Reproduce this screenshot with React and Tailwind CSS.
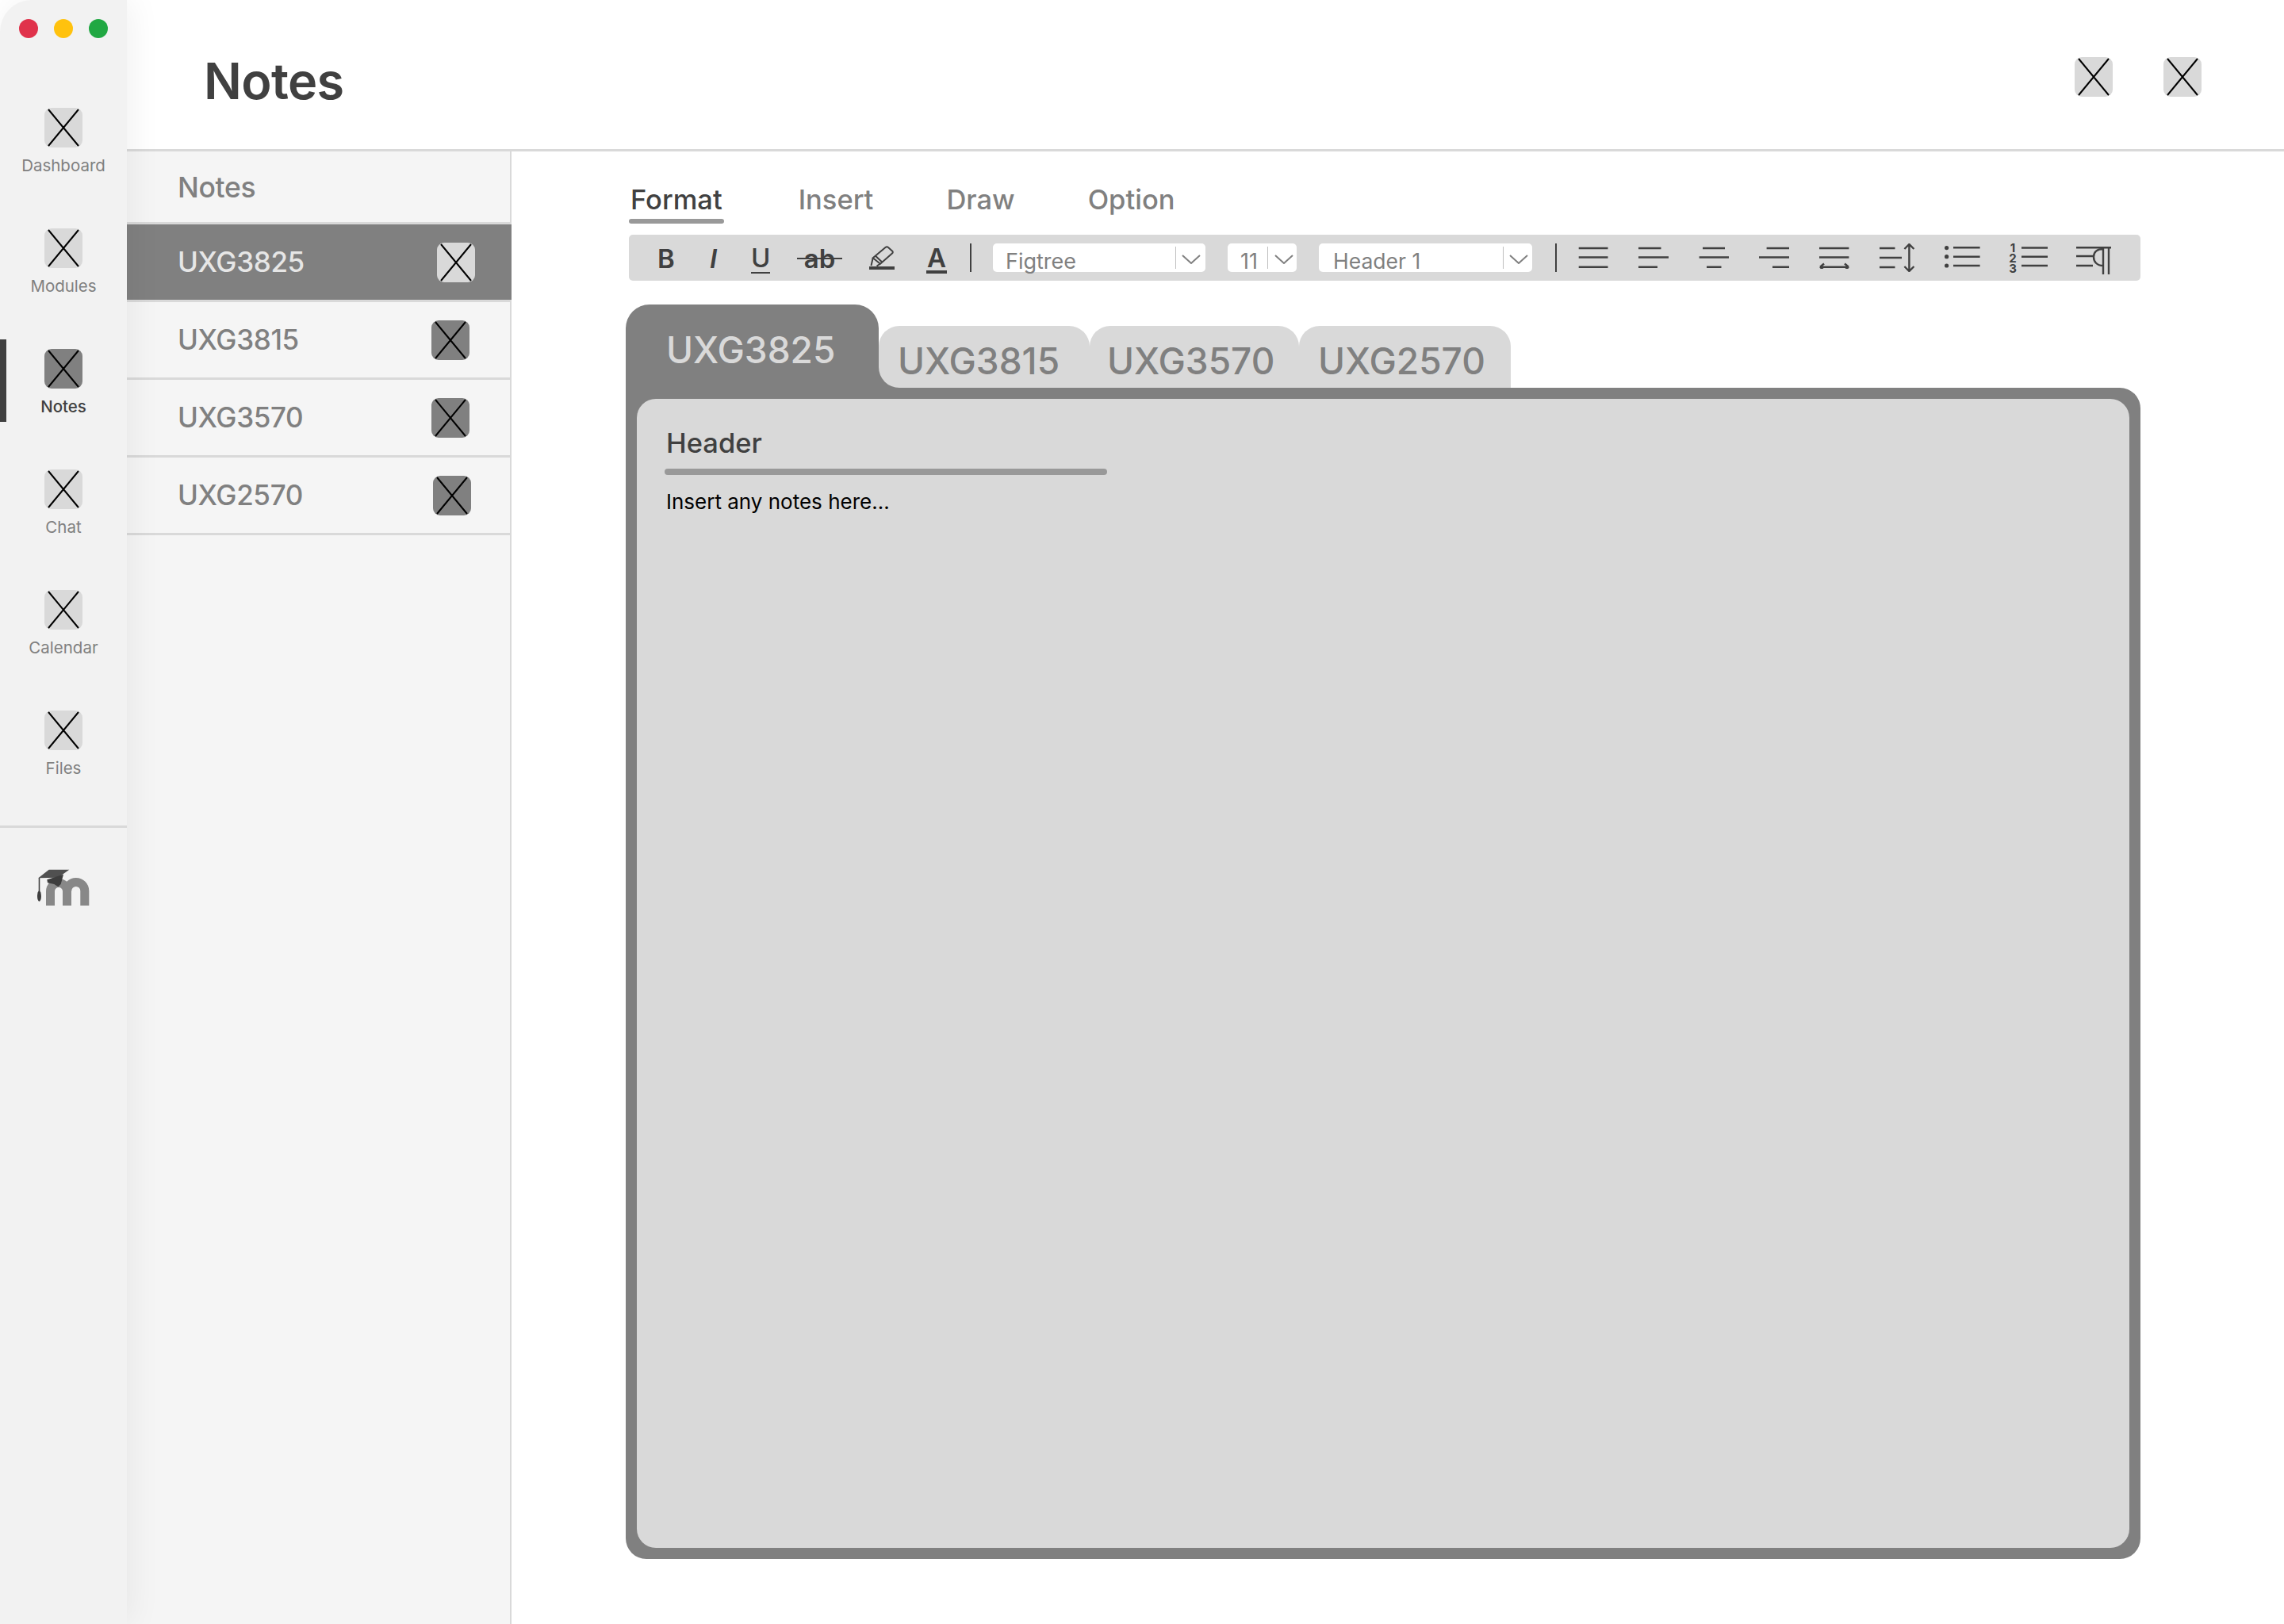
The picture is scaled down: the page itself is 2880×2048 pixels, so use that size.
import React from "react";

function Ph({ dark = false, className = "" }) {
  return (
    <div className={`w-[48px] h-[50px] shrink-0 rounded-[9px] ${dark ? "bg-[#808080]" : "bg-[#d9d9d9]"} ${className}`}>
      <svg viewBox="0 0 48 50" width="48" height="50" fill="none" stroke="#000" strokeWidth="2">
        <path d="M5 2 L43 48 M43 2 L5 48" />
      </svg>
    </div>
  );
}

function NavItem({ label, active = false }) {
  return (
    <div className="relative flex flex-col items-center">
      {active && <div className="absolute left-0 top-[-12px] w-[8px] h-[104px] bg-[#404040]" />}
      <Ph dark={active} />
      <div className={`mt-[9px] h-[27px] leading-[28px] text-[20.5px] ${active ? "text-[#404040] font-medium" : "text-[#808080]"}`}>{label}</div>
    </div>
  );
}

function Chevron({ className = "" }) {
  return (
    <svg className={`mt-[3px] ${className}`} width="24" height="12" viewBox="0 0 24 12" fill="none" stroke="#808080" strokeWidth="2">
      <path d="M1 1 L12 11 L23 1" />
    </svg>
  );
}

function ListRow({ label, iconClass }) {
  return (
    <div className="h-[98px] flex items-center border-b-[3px] border-[#d9d9d9] pl-[64px]">
      <div className="text-[35px] font-medium text-[#808080] tracking-[-0.01em]">{label}</div>
      <Ph dark className={`ml-auto ${iconClass}`} />
    </div>
  );
}

function Lines({ tops, className = "" }) {
  return (
    <svg className={className} width="40" height="28" viewBox="0 0 40 28" fill="none" stroke="#404040" strokeWidth="2.4">
      <path d={tops} />
    </svg>
  );
}

export default function App() {
  return (
    <div className="w-[2880px] h-[2048px] flex bg-white overflow-hidden font-['Inter','Noto_Sans',sans-serif]">
      <aside className="relative z-10 w-[160px] shrink-0 rounded-tl-[40px] bg-[#f2f2f2] shadow-[6px_0_40px_rgba(0,0,0,0.06)] flex flex-col">
        <div className="flex gap-[20px] pl-[24px] pt-[24px]">
          <div className="w-[24px] h-[24px] rounded-full bg-[#e0324b]" />
          <div className="w-[24px] h-[24px] rounded-full bg-[#ffc20e]" />
          <div className="w-[24px] h-[24px] rounded-full bg-[#21a843]" />
        </div>
        <nav className="mt-[88px] flex flex-col gap-[66px]">
          <NavItem label="Dashboard" />
          <NavItem label="Modules" />
          <NavItem label="Notes" active />
          <NavItem label="Chat" />
          <NavItem label="Calendar" />
          <NavItem label="Files" />
        </nav>
        <div className="mt-[59px] h-[3px] bg-[#d9d9d9]" />
        <div className="mt-[52px] pl-[47px]">
          <svg width="66" height="46" viewBox="0 0 66 46" fill="none">
            <path d="M16.5 46 V28 a10.5 10.5 0 0 1 21 0 V46 M37.8 27.4 a11 11 0 0 1 22 0 V46" stroke="#888888" strokeWidth="11" />
            <path d="M14.7 0.7 H40.3 L26.3 10.7 L1.3 11.3 Z" fill="#505050" />
            <path d="M12.3 13.3 L33 6.7 L29.7 19 L26.3 22.3 L21.3 19 L13 17.3 Z" fill="#3d3d3d" />
            <path d="M2.5 11 V28" stroke="#404040" strokeWidth="1.6" />
            <ellipse cx="2.5" cy="34" rx="2.5" ry="6.7" fill="#404040" />
          </svg>
        </div>
      </aside>

      <main className="flex-1 flex flex-col min-w-0">
        <header className="h-[191px] shrink-0 border-b-[3px] border-[#d9d9d9] flex items-center pl-[97px] pr-[104px] pt-[5px]">
          <h1 className="text-[63px] leading-[76px] font-semibold text-[#404040] tracking-[-0.01em] mt-[11px]">Notes</h1>
          <div className="ml-auto flex gap-[64px]">
            <Ph />
            <Ph />
          </div>
        </header>

        <div className="flex-1 flex min-h-0">
          <section className="w-[485px] shrink-0 bg-[#f5f5f5] border-r-[2px] border-[#d9d9d9] flex flex-col">
            <div className="h-[92px] shrink-0 border-b-[3px] border-[#d9d9d9] flex items-center pl-[64px] pt-[2px]">
              <div className="text-[35.5px] font-medium text-[#808080] tracking-[-0.01em]">Notes</div>
            </div>
            <div className="h-[98px] mr-[-2px] flex items-center bg-[#808080] border-b-[3px] border-[#d9d9d9] pl-[64px]">
              <div className="text-[35px] font-medium text-[#e6e6e6] tracking-[-0.01em]">UXG3825</div>
              <Ph className="ml-auto mr-[46px]" />
            </div>
            <ListRow label="UXG3815" iconClass="mr-[51px]" />
            <ListRow label="UXG3570" iconClass="mr-[51px]" />
            <ListRow label="UXG2570" iconClass="mr-[49px]" />
          </section>

          <section className="flex-1 pl-[144px] pt-[39px] min-w-0">
            <div className="ml-[6px] h-[44px] flex gap-[92px] text-[34.5px] leading-[44px] font-medium text-[#808080]">
              <div className="relative text-[#404040] mr-[4px]">
                Format
                <div className="absolute left-[-2px] right-[-2px] top-[46px] h-[6px] rounded-full bg-[#999999]" />
              </div>
              <div>Insert</div>
              <div>Draw</div>
              <div>Option</div>
            </div>

            <div className="ml-[4px] mt-[22px] w-[1906px] h-[58px] rounded-[5px] bg-[#d9d9d9] flex items-center text-[#404040]">
              <div className="ml-[36px] w-[20px] text-[33px] leading-none font-semibold text-center pt-[2px]">B</div>
              <div className="ml-[46px] w-[9px] text-[33px] leading-none font-semibold italic text-center pt-[2px]">I</div>
              <div className="ml-[43px] w-[24px] relative text-[33px] leading-none font-medium text-center">
                U
                <div className="absolute left-0 right-0 top-[34px] h-[2px] bg-[#404040]" />
              </div>
              <div className="ml-[34px] w-[57px] relative text-[33px] leading-none font-semibold text-center pt-[2px]">
                ab
                <div className="absolute left-0 right-0 top-[17px] h-[2px] bg-[#404040]" />
              </div>
              <svg className="ml-[34px]" width="32" height="30" viewBox="0 0 32 30" fill="none" stroke="#404040" strokeWidth="2">
                <path d="M4.7 15.3 L20.5 2 Q22.3 0.6 24 2 L29 6.4 Q30.6 8 29 9.4 L14 22.7 Z M8 12.7 L16.7 21 M4.7 15.3 L2.5 25 M14 22.7 L9.5 25.5" />
                <path d="M0 26 H32 V30 H0 Z" fill="#404040" stroke="none" />
              </svg>
              <div className="ml-[40px] w-[26px] relative text-[33px] leading-none font-semibold text-center">
                A
                <div className="absolute left-0 right-0 top-[32px] h-[4px] bg-[#404040]" />
              </div>
              <div className="ml-[29px] w-[2px] h-[36px] bg-[#404040]" />

              <div className="ml-[27px] w-[268px] h-[36px] rounded-[5px] bg-white flex items-center pl-[16px] text-[27px] text-[#808080]">
                <div className="w-[214px] pt-[10px]">Figtree</div>
                <div className="w-[1px] h-[28px] bg-[#bfbfbf]" />
                <Chevron className="ml-[7px]" />
              </div>
              <div className="ml-[28px] w-[87px] h-[36px] rounded-[5px] bg-white flex items-center pl-[16px] text-[27px] text-[#808080]">
                <div className="w-[34px] pt-[10px]">11</div>
                <div className="w-[1px] h-[28px] bg-[#bfbfbf]" />
                <Chevron className="ml-[8px]" />
              </div>
              <div className="ml-[28px] w-[269px] h-[36px] rounded-[5px] bg-white flex items-center pl-[18px] text-[26.5px] text-[#808080]">
                <div className="w-[214px] pt-[10px]">Header 1</div>
                <div className="w-[1px] h-[28px] bg-[#bfbfbf]" />
                <Chevron className="ml-[7px]" />
              </div>
              <div className="ml-[29px] w-[2px] h-[36px] bg-[#404040]" />

              <Lines className="ml-[27px]" tops="M0.7 2 H37.5 M0.7 13.5 H37.5 M0.7 25.7 H37.5" />
              <Lines className="ml-[36px]" tops="M0 2 H28.5 M0 13.5 H38 M0 25.7 H24" />
              <Lines className="ml-[36px]" tops="M5 2 H33 M0.6 13.5 H38 M10 25.7 H28.5" />
              <Lines className="ml-[36px]" tops="M9.6 2 H38 M0 13.5 H38 M17 25.7 H38" />
              <Lines className="ml-[36px]" tops="M0 2 H37.4 M0 13.5 H37.4 M1 25.7 H37 M1 25.7 L6 21.5 M1 25.7 L6 30 M37 25.7 L32 21.5 M37 25.7 L32 30" />
              <svg className="ml-[36px]" width="47" height="36" viewBox="0 0 47 36" fill="none" stroke="#404040" strokeWidth="2.4">
                <path d="M0 6 H19.5 M0 18 H28 M0 30 H19.5 M37.4 1 V35 M31.4 7 L37.4 1 L43.4 7 M31.4 29 L37.4 35 L43.4 29" />
              </svg>
              <svg className="ml-[35px]" width="46" height="30" viewBox="0 0 46 30" fill="none" stroke="#404040" strokeWidth="2.6">
                <circle cx="2.6" cy="2.6" r="2.6" fill="#404040" stroke="none" />
                <circle cx="2.6" cy="13.7" r="2.6" fill="#404040" stroke="none" />
                <circle cx="2.6" cy="25" r="2.6" fill="#404040" stroke="none" />
                <path d="M11 2.3 H44.6 M11 13.7 H44.6 M11 25 H44.6" />
              </svg>
              <div className="ml-[33px] flex items-center gap-[3.5px]">
                <div className="w-[14px] text-[15px] leading-[13px] font-bold text-center">1<br />2<br />3</div>
                <svg width="33" height="28" viewBox="0 0 33 28" fill="none" stroke="#404040" strokeWidth="2.6">
                  <path d="M0 1.5 H33 M0 12.7 H33 M0 24 H33" />
                </svg>
              </div>
              <svg className="ml-[36px] mt-[2px]" width="46" height="40" viewBox="0 0 46 40" fill="none" stroke="#404040" strokeWidth="2.4">
                <path d="M0 6.3 H44 M0 17 H21 M0 29 H21" />
                <path d="M34 7 V40 M41 7 V40 M34 8 C25 8 22 13 22 18 C22 24 26 29 34 29" />
              </svg>
            </div>

            <div className="mt-[30px] w-[1910px]">
              <div className="h-[105px] flex items-end">
                <div className="w-[319px] h-[105px] rounded-t-[30px] bg-[#808080] pl-[51px] pt-[30px] text-[46px] leading-[54px] font-medium text-[#d9d9d9]">UXG3825</div>
                <div className="w-[266px] h-[78px] bg-[linear-gradient(to_top,#808080_30px,transparent_30px)]">
                  <div className="h-[78px] rounded-t-[26px] rounded-bl-[26px] bg-[#d9d9d9] pl-[24px] pt-[17px] text-[46px] leading-[54px] font-medium text-[#808080]">UXG3815</div>
                </div>
                <div className="w-[264px] h-[78px] rounded-t-[26px] bg-[#d9d9d9] pl-[22px] pt-[17px] text-[46px] leading-[54px] font-medium text-[#808080]">UXG3570</div>
                <div className="w-[267px] h-[78px] rounded-t-[26px] bg-[#d9d9d9] pl-[24px] pt-[17px] text-[46px] leading-[54px] font-medium text-[#808080]">UXG2570</div>
              </div>
              <div className="h-[1477px] rounded-b-[26px] rounded-tr-[26px] bg-[#808080] p-[14px]">
                <div className="h-full rounded-[24px] bg-[#d9d9d9] pl-[37px] pt-[34px]">
                  <div className="text-[34.5px] leading-[44px] font-medium text-[#404040]">Header</div>
                  <div className="ml-[-2px] mt-[10px] w-[558px] h-[8px] rounded-full bg-[#999999]" />
                  <div className="mt-[17px] text-[26px] leading-[34px] text-black">Insert any notes here...</div>
                </div>
              </div>
            </div>
          </section>
        </div>
      </main>
    </div>
  );
}
